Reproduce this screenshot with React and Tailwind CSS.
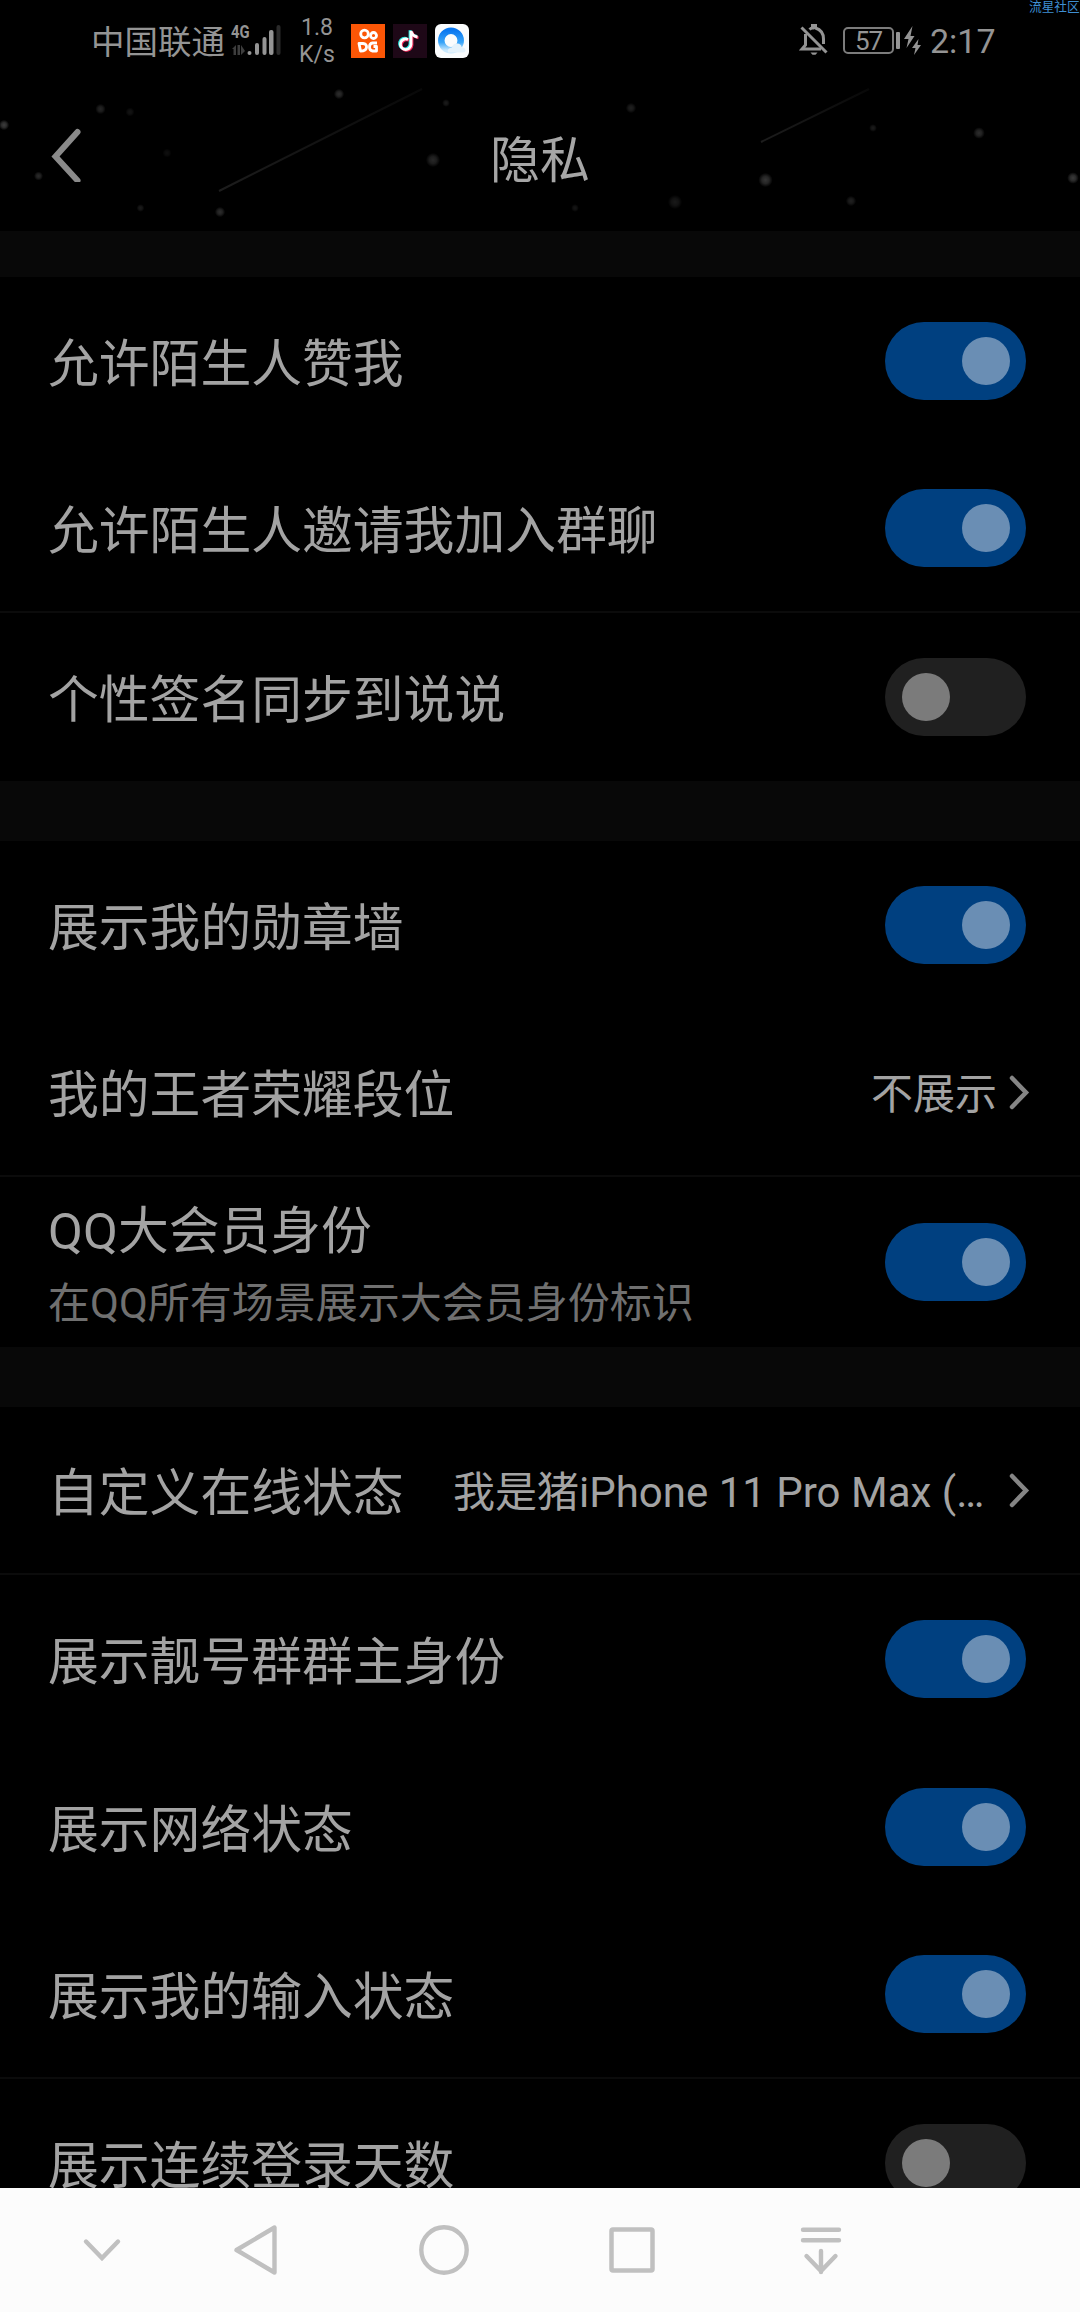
import { useState } from 'react';
import clsx from 'clsx';

const SECTIONS = [
  [
    { id: 'like', label: '允许陌生人赞我', on: true },
    { id: 'invite', label: '允许陌生人邀请我加入群聊', on: true, divider: true },
    { id: 'signature', label: '个性签名同步到说说', on: false },
  ],
  [
    { id: 'medal', label: '展示我的勋章墙', on: true },
    { id: 'rank', label: '我的王者荣耀段位', value: '不展示', divider: true },
    { id: 'vip', label: 'QQ大会员身份', desc: '在QQ所有场景展示大会员身份标识', on: true },
  ],
  [
    { id: 'online', label: '自定义在线状态', value: '我是猪iPhone 11 Pro Max (…', wide: true, divider: true },
    { id: 'owner', label: '展示靓号群群主身份', on: true },
    { id: 'network', label: '展示网络状态', on: true },
    { id: 'typing', label: '展示我的输入状态', on: true, divider: true },
    { id: 'days', label: '展示连续登录天数', on: false },
  ],
];

// x, y, radius, opacity
const STARS = [
  [339, 18, 4, 0.18], [446, 27, 3, 0.11], [100.5, 33, 4, 0.15], [130, 36, 3.5, 0.08],
  [4, 49, 4, 0.24], [167, 77, 3.5, 0.06], [433, 84, 5.5, 0.16], [38.5, 100, 3.5, 0.17],
  [140.5, 132, 3, 0.11], [220, 136, 4, 0.18], [631, 32, 4, 0.13], [873, 52, 3, 0.11],
  [979, 57, 4.5, 0.18], [765.5, 104, 5.5, 0.21], [1073, 102, 4.5, 0.23], [675, 126, 5.5, 0.1],
  [851, 125, 4, 0.13], [575, 132, 3, 0.09],
];

function StatusBar() {
  return (
    <div className="flex h-[76px] items-start text-[#949494]">
      <span className="ml-[91px] mt-[26px] text-[33.5px] leading-[34px] whitespace-nowrap">中国联通</span>
      <div className="ml-[6px] mt-[25px] w-[50px] h-[31px] relative">
        <svg viewBox="0 0 50 31" className="h-full w-full" fill="currentColor">
          <path d="M1 24l4-4v10h-2.500v-6zM6.500 20h2.500v10h-2.500zM10 20v10l4-4z" fill="#3d3d3d" />
          <circle cx="18.500" cy="28" r="2" />
          <rect x="24" y="18" width="4" height="12" rx="2" />
          <rect x="31.500" y="12" width="4" height="18" rx="2" />
          <rect x="38" y="5" width="4.500" height="25" rx="2" />
          <rect x="45.500" y="0" width="4" height="30" rx="2" fill="#2a2a2a" />
        </svg>
        <span className="absolute left-0 top-[-2px] origin-left scale-x-[0.82] text-[18px] leading-[18px] font-bold">4G</span>
      </div>
      <div className="ml-[18px] mt-[14px] w-[36px] text-center text-[23px] leading-[27px]">
        <div>1.8</div>
        <div>K/s</div>
      </div>
      <div className="ml-[16px] mt-[24px] flex gap-2">
        <svg viewBox="0 0 34 34" className="size-[34px]">
          <rect width="34" height="34" fill="#fb5606" />
          <g fill="none" stroke="#fff" strokeWidth="2.800" strokeLinejoin="round">
            <circle cx="13.500" cy="10" r="3.800" />
            <circle cx="22.500" cy="11.500" r="3" />
            <path d="M8 19.500l1.500 7.500q5.500 0 6-3.500t-3.500-4z" />
            <path d="M26 19h-4.500q-3 .5-3 4t3 4h4v-4.500h-3" />
          </g>
        </svg>
        <svg viewBox="0 0 34 34" className="size-[34px]">
          <rect width="34" height="34" fill="#1e0817" />
          <g fill="none" strokeWidth="2.800">
            <path d="M15 15.500a5.300 5.300 0 1 0 3 5V7q1 5 6.500 6" stroke="#25e3dc" transform="translate(-1 -.8)" />
            <path d="M15 15.500a5.300 5.300 0 1 0 3 5V7q1 5 6.500 6" stroke="#f42c5a" transform="translate(1 .8)" />
            <path d="M15 15.500a5.300 5.300 0 1 0 3 5V7q1 5 6.500 6" stroke="#fff" />
          </g>
        </svg>
        <svg viewBox="0 0 34 34" className="size-[34px]">
          <defs>
            <linearGradient id="qb" x1="0" y1="0" x2="0" y2="1">
              <stop offset="0" stopColor="#0a78f0" />
              <stop offset="0.6" stopColor="#38a5f8" />
              <stop offset="1" stopColor="#c8e8fd" />
            </linearGradient>
          </defs>
          <rect width="34" height="34" rx="6" fill="#fafcfd" />
          <circle cx="16" cy="16.500" r="9.700" fill="none" stroke="url(#qb)" strokeWidth="6.500" />
          <path d="M13 28.500q-1.500-4 4-5 1-4.500 5-4 4 0 4.500 3.500 4 .5 4 3.500 0 2-2.500 2z" fill="#e4f2fb" />
        </svg>
      </div>
      <svg viewBox="0 0 30 34" className="ml-auto mt-[23px] h-[34px] w-[30px]" fill="none" stroke="currentColor" strokeWidth="3">
        <path d="M2.500 4.500l25 25" />
        <path d="M6.500 11v11l-3.500 4h19M10.500 6.500q1.500-1.500 3-1.500v-2.500h3V5q8 2.500 8 11v5" />
        <path d="M11.500 29.500h7l-2 2.200h-3z" fill="currentColor" stroke="none" />
      </svg>
      <div className="ml-[14px] mt-[27px] h-[27px] w-[51px] rounded-[5px] border-2 border-[#7c7c7c] text-center text-[26px] leading-[24px] tracking-[-1px]">57</div>
      <div className="ml-[2px] mt-[32px] h-[17px] w-[4px] rounded-[1px] bg-[#949494]" />
      <svg viewBox="0 0 18 30" className="ml-[4px] mt-[26px] h-[30px] w-[18px]" fill="currentColor">
        <path d="M8.500 0L0 13h4.500L2.500 22 10.500 10H6.500z" />
        <path d="M14.500 13l-6.500 9h3.500l-1.500 7 7-10h-3.500z" />
      </svg>
      <span className="ml-[8px] mt-[24px] mr-[83px] w-[67px] text-[34px] leading-[34px]">2:17</span>
    </div>
  );
}

function Header() {
  return (
    <header className="relative h-[155px]">
      <svg viewBox="0 0 1080 155" className="absolute inset-0 h-full w-full">
        <defs>
          <radialGradient id="star">
            <stop offset="0" stopColor="#fff" />
            <stop offset="0.5" stopColor="#fff" stopOpacity="0.7" />
            <stop offset="1" stopColor="#fff" stopOpacity="0" />
          </radialGradient>
          <linearGradient id="trail" x1="0" y1="1" x2="1" y2="0">
            <stop offset="0" stopColor="#1d1d1d" />
            <stop offset="1" stopColor="#080808" />
          </linearGradient>
        </defs>
        <path d="M219 115L422 13" stroke="url(#trail)" strokeWidth="2" />
        <path d="M761 66L869 13" stroke="url(#trail)" strokeWidth="2" />
        {STARS.map(([x, y, r, o]) => (
          <circle key={`${x}-${y}`} cx={x} cy={y} r={r * 1.3} fill="url(#star)" opacity={o} />
        ))}
      </svg>
      <div className="relative flex h-full items-center">
        <button className="ml-[50px] w-[32px]" aria-label="返回">
          <svg viewBox="0 0 32 56" className="h-[56px] w-[32px]" fill="none" stroke="#8a8a8a" strokeWidth="6" strokeLinecap="round">
            <path d="M27.500 6L5.500 30.500l22 24" />
          </svg>
        </button>
        <h1 className="mr-[82px] flex-1 pt-[15px] text-center text-[50px] leading-none text-[#a6a6a6]">隐私</h1>
      </div>
    </header>
  );
}

function Toggle({ on, onClick }) {
  return (
    <button
      role="switch"
      aria-checked={on}
      onClick={onClick}
      className={clsx(
        'mb-[1px] flex h-[78px] w-[141px] shrink-0 items-center rounded-full px-[16.5px]',
        on ? 'justify-end bg-[#004080]' : 'justify-start bg-[#202020]'
      )}
    >
      <span className={clsx('size-12 rounded-full', on ? 'bg-[#6a8eb4]' : 'bg-[#7b7b7b]')} />
    </button>
  );
}

function Row({ item, on, onToggle }) {
  return (
    <div
      className={clsx(
        'flex items-center justify-between pl-[48px]',
        item.desc ? 'h-[170px]' : 'h-[168px]',
        item.value ? 'pr-[50px]' : 'pr-[54px]',
        item.divider && 'border-b-2 border-[#0b0b0b]'
      )}
    >
      {item.desc ? (
        <div className="flex flex-col gap-[25px] pt-[8px] whitespace-nowrap">
          <span className="text-[50.8px] leading-none text-[#a3a3a3]">{item.label}</span>
          <span className="text-[42px] leading-none text-[#707070]">{item.desc}</span>
        </div>
      ) : (
        <span className="pt-[8px] text-[50.8px] leading-none whitespace-nowrap text-[#a3a3a3]">{item.label}</span>
      )}
      {item.value ? (
        <div className={clsx('flex items-center justify-between', item.wide ? 'w-[577px]' : 'w-[159px]')}>
          <span className="pt-[6px] text-[42px] leading-none whitespace-nowrap text-[#a3a3a3]">{item.value}</span>
          <svg viewBox="0 0 22 36" className="h-[36px] w-[22px]" fill="none" stroke="#858585" strokeWidth="4.500" strokeLinecap="round">
            <path d="M4 4l14 14.500L4 33" />
          </svg>
        </div>
      ) : (
        <Toggle on={on} onClick={onToggle} />
      )}
    </div>
  );
}

function NavBar() {
  const cls = 'size-[60px] shrink-0';
  return (
    <nav className="flex h-[124px] items-center bg-[#fcfcfc] pl-[72px]">
      <svg viewBox="0 0 60 60" className={cls} fill="none" stroke="#c0c0c0" strokeWidth="4.400" strokeLinecap="round">
        <path d="M14 21.500l16 16.500 16-16.500" />
      </svg>
      <svg viewBox="0 0 60 60" className={clsx(cls, 'ml-[94px]')} fill="none" stroke="#c0c0c0" strokeWidth="4.400" strokeLinejoin="round">
        <path d="M48.500 7.500v45L10.500 30z" />
      </svg>
      <svg viewBox="0 0 60 60" className={clsx(cls, 'ml-[128px]')} fill="none" stroke="#c0c0c0" strokeWidth="4.400">
        <circle cx="30" cy="30" r="22.700" />
      </svg>
      <svg viewBox="0 0 60 60" className={clsx(cls, 'ml-[128px]')} fill="none" stroke="#c0c0c0" strokeWidth="4.500">
        <rect x="9.500" y="9.500" width="41" height="41" rx="1.500" />
      </svg>
      <svg viewBox="0 0 60 60" className={clsx(cls, 'ml-[129px]')} fill="none" stroke="#c0c0c0" strokeWidth="4.400" strokeLinecap="round">
        <path d="M12 9.700h36M12 20.200h36M30 31v21M15.500 36L30 51l14.500-15" />
      </svg>
    </nav>
  );
}

export default function App() {
  const [state, setState] = useState(() =>
    Object.fromEntries(SECTIONS.flat().map((item) => [item.id, item.on]))
  );

  const toggle = (id) => setState((s) => ({ ...s, [id]: !s[id] }));

  return (
    <div className="relative flex h-[2312px] w-[1080px] flex-col overflow-hidden bg-black font-['Roboto','Noto_Sans_CJK_SC',sans-serif]">
      <StatusBar />
      <Header />
      <main className="min-h-0 flex-1 overflow-hidden">
        {SECTIONS.map((items, i) => (
          <section key={i}>
            <div className={clsx('bg-[#080808]', i === 0 ? 'h-[46px]' : 'h-[60px]')} />
            {items.map((item) => (
              <Row key={item.id} item={item} on={state[item.id]} onToggle={() => toggle(item.id)} />
            ))}
          </section>
        ))}
      </main>
      <NavBar />
      <span className="absolute top-0 left-[1029px] text-[12.7px] leading-[14px] whitespace-nowrap text-[#3f8fd2]">流星社区</span>
    </div>
  );
}
